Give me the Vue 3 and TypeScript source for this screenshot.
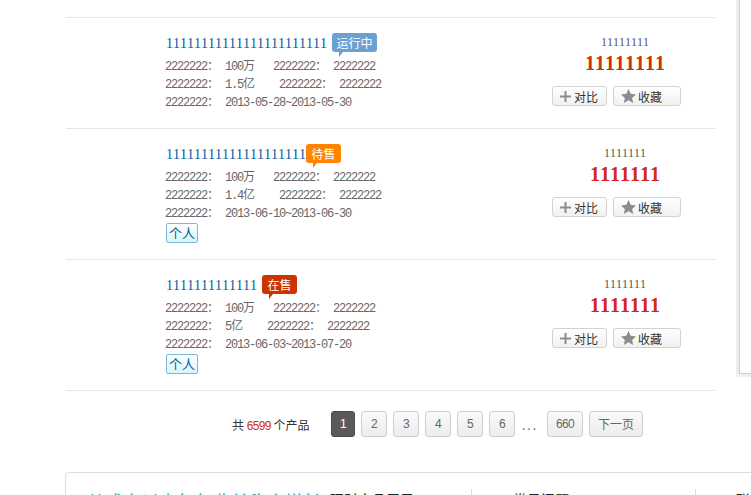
<script setup lang="ts">
interface Product {
  title: string
  badge: string
  badgeKind: string
  scale: string
  amount: string
  period: string
  price: string
  priceColor: string
  personal: boolean
}

const products: Product[] = [
  { title: '11111111111111111111111', badge: '运行中', badgeKind: 'running', scale: '100万', amount: '1.5亿', period: '2013-05-28~2013-05-30', price: '11111111', priceColor: '#cc3300', personal: false },
  { title: '11111111111111111111', badge: '待售', badgeKind: 'pending', scale: '100万', amount: '1.4亿', period: '2013-06-10~2013-06-30', price: '1111111', priceColor: '#d5261c', personal: true },
  { title: '1111111111111', badge: '在售', badgeKind: 'selling', scale: '100万', amount: '5亿', period: '2013-06-03~2013-07-20', price: '1111111', priceColor: '#d5261c', personal: true },
]

const pages = ['2', '3', '4', '5', '6']
</script>

<template>
  <div class="page">
    <div class="side-panel"></div>

    <ul class="list">
      <li v-for="p in products" :key="p.period" class="row">
        <div class="info">
          <div class="title-line">
            <a class="title">{{ p.title }}</a>
            <span class="badge" :class="p.badgeKind">{{ p.badge }}</span>
          </div>
          <p class="meta">
            <span class="lat">2222222</span><span class="cjk">：</span><span class="val"><span class="lat">{{ p.scale.slice(0, -1) }}</span><span class="cjk">{{ p.scale.slice(-1) }}</span></span><span class="second"><span class="lat">2222222</span><span class="cjk">：</span><span class="val lat">2222222</span></span>
          </p>
          <p class="meta">
            <span class="lat">2222222</span><span class="cjk">：</span><span class="val"><span class="lat">{{ p.amount.slice(0, -1) }}</span><span class="cjk">{{ p.amount.slice(-1) }}</span></span><span class="second wider"><span class="lat">2222222</span><span class="cjk">：</span><span class="val lat">2222222</span></span>
          </p>
          <p class="meta">
            <span class="lat">2222222</span><span class="cjk">：</span><span class="val lat">{{ p.period }}</span>
          </p>
          <span v-if="p.personal" class="tag">个人</span>
        </div>

        <div class="buy">
          <div class="prices">
            <div class="small-price">{{ p.price }}</div>
            <div class="big-price" :style="{ color: p.priceColor }">{{ p.price }}</div>
          </div>
          <div class="actions">
            <button class="act compare">
              <svg width="11" height="11" viewBox="0 0 11 11"><path d="M4.500 0h2v4.500H11v2H6.500V11h-2V6.500H0v-2h4.500z" fill="#8c8c8c" /></svg>
              对比
            </button>
            <button class="act fav">
              <svg width="15" height="14" viewBox="0 0 15 14"><path d="M7.500 0l2.200 4.800 5.300.6-3.900 3.600 1.100 5-4.700-2.700L2.800 14l1.100-5L0 5.400l5.300-.6z" fill="#8c8c8c" /></svg>
              收藏
            </button>
          </div>
        </div>
      </li>
    </ul>

    <div class="pager">
      <span class="total">共 <em>6599</em> 个产品</span>
      <a class="pg current">1</a>
      <a v-for="n in pages" :key="n" class="pg">{{ n }}</a>
      <span class="dots">...</span>
      <a class="pg wide">660</a>
      <a class="pg next">下一页</a>
    </div>

    <div class="bottom-card">
      <div class="col col-a"><span class="teal">从成立以来每年收益稳定增长</span>理财产品展示</div>
      <div class="col col-b">常见问题</div>
      <div class="col col-c">联系</div>
    </div>
  </div>
</template>

<style>
html, body {
  margin: 0;
  background: #fff;
  overflow: hidden;
}
</style>

<style scoped>
.page {
  position: relative;
  width: 751px;
  height: 495px;
  overflow: hidden;
  padding-top: 17px;
  box-sizing: border-box;
  font-family: "Noto Sans CJK SC", sans-serif;
  color: #333;
}

.side-panel {
  position: absolute;
  left: 736px;
  top: -10px;
  width: 40px;
  height: 387px;
  border: 3px solid #eee;
  border-radius: 3px;
  box-shadow: inset 1px -1px 0 #ccc;
  box-sizing: border-box;
  background: #fff;
}

.list {
  list-style: none;
  margin: 0 0 0 66px;
  padding: 0;
  width: 650px;
  border-top: 1px solid #e6e6e6;
}

.row {
  display: flex;
  justify-content: space-between;
  border-bottom: 1px solid #e6e6e6;
  padding: 15px 35px 0 100px;
  min-height: 95px;
}

.row + .row {
  min-height: 115px;
}

/* mono digits squeezed to the 6px cell of the original bitmap font */
.lat {
  font-family: "Liberation Mono", monospace;
  font-size: 12px;
  letter-spacing: -1.2px;
}

.cjk {
  font-size: 12px;
}

.title-line {
  display: flex;
  align-items: center;
  height: 20px;
}

.title {
  font-family: "Liberation Serif", serif;
  font-kerning: none;
  font-size: 14px;
  color: #00589c;
  padding-top: 1px;
}

.badge {
  position: relative;
  margin-left: 5px;
  height: 19px;
  line-height: 19px;
  padding: 0 5.5px;
  border-radius: 3px;
  color: #fff;
  font-size: 12px;
  top: -1px;
}

.badge::after {
  content: '';
  position: absolute;
  left: 7px;
  top: 19px;
  border-left: 4px solid;
  border-bottom: 5px solid transparent;
}

.running { background: #6aa1d2; padding: 0 4.500px; }
.running::after { border-left-color: #6aa1d2; }
.pending { background: #ff8400; margin-left: 0; }
.pending::after { border-left-color: #ff8400; }
.selling { background: #cc3300; }
.selling::after { border-left-color: #cc3300; }

.meta {
  margin: 0 0 0 -1px;
  height: 18px;
  line-height: 18px;
  color: #666;
  white-space: nowrap;
}

.title-line + .meta {
  margin-top: 1px;
}

.val {
  margin-left: 6px;
}

.second {
  margin-left: 18px;
}

.second.wider {
  margin-left: 24px;
}

.tag {
  display: block;
  width: 32px;
  height: 20px;
  line-height: 18px;
  margin-top: 4px;
  box-sizing: border-box;
  border: 1px solid #7fb7d6;
  border-radius: 2px;
  background: linear-gradient(#fff, #d9f5fb);
  color: #00589c;
  font-size: 13px;
  text-align: center;
}

.buy {
  width: 129px;
  text-align: center;
}

.prices {
  padding-left: 17px;
}

.small-price {
  font-family: "Liberation Serif", serif;
  font-kerning: none;
  font-size: 12px;
  line-height: 18px;
  color: #555;
}

.big-price {
  font-family: "Liberation Serif", serif;
  font-kerning: none;
  font-size: 20px;
  font-weight: bold;
  line-height: 22px;
  margin-top: 1px;
}

.actions {
  display: flex;
  gap: 6px;
  margin-top: 12px;
}

.act {
  display: flex;
  align-items: center;
  height: 20px;
  padding: 0;
  box-sizing: border-box;
  border: 1px solid #d2d2d2;
  border-radius: 3px;
  background: linear-gradient(#fff, #f1f1f1);
  color: #333;
  font-family: inherit;
  font-size: 12px;
}

.compare {
  width: 55px;
  padding-left: 7px;
  gap: 3px;
}

.fav {
  width: 68px;
  padding-left: 7px;
  gap: 2px;
}

.pager {
  display: flex;
  align-items: center;
  margin: 20px 0 0 232px;
  height: 26px;
}

.total {
  width: 99px;
  font-size: 12px;
  color: #333;
}

.total em {
  font-family: "Liberation Sans", sans-serif;
  font-style: normal;
  font-size: 12px;
  letter-spacing: -0.67px;
  color: #cc3300;
}

.pg {
  box-sizing: border-box;
  width: 26px;
  height: 26px;
  line-height: 24px;
  margin-right: 6px;
  border: 1px solid #d0d0d0;
  border-radius: 3px;
  background: linear-gradient(#fafafa, #ececec);
  color: #666;
  font-family: "Liberation Sans", sans-serif;
  font-size: 12px;
  letter-spacing: -0.67px;
  text-align: center;
}

.current {
  width: 24px;
  background: #5a5a5a;
  border-color: #4c4c4c;
  color: #fff;
}

.dots {
  width: 26px;
  padding-left: 1px;
  box-sizing: border-box;
  font-size: 12px;
  letter-spacing: 2px;
  color: #666;
}

.wide {
  width: 36px;
}

.next {
  width: 54px;
  margin-right: 0;
  font-family: "Noto Sans CJK SC", sans-serif;
  letter-spacing: 0;
}

.bottom-card {
  display: flex;
  width: 700px;
  height: 80px;
  margin: 35px 0 0 65px;
  border: 1px solid #ddd;
  border-radius: 4px;
  padding-top: 16px;
  box-sizing: border-box;
}

.col {
  height: 60px;
  font-size: 14px;
  line-height: 20px;
  color: #222;
  white-space: nowrap;
}

.col-a {
  width: 406px;
  padding-left: 21px;
  box-sizing: border-box;
  border-right: 1px solid #ddd;
}

.teal {
  display: inline-block;
  width: 243px;
  overflow: hidden;
  margin-top: 1px;
  color: #27a4b5;
  font-size: 18px;
  line-height: 22px;
  vertical-align: top;
}

.col-b {
  width: 224px;
  padding-left: 41px;
  box-sizing: border-box;
  border-right: 1px solid #ddd;
}

.col-c {
  padding-left: 40px;
}
</style>
